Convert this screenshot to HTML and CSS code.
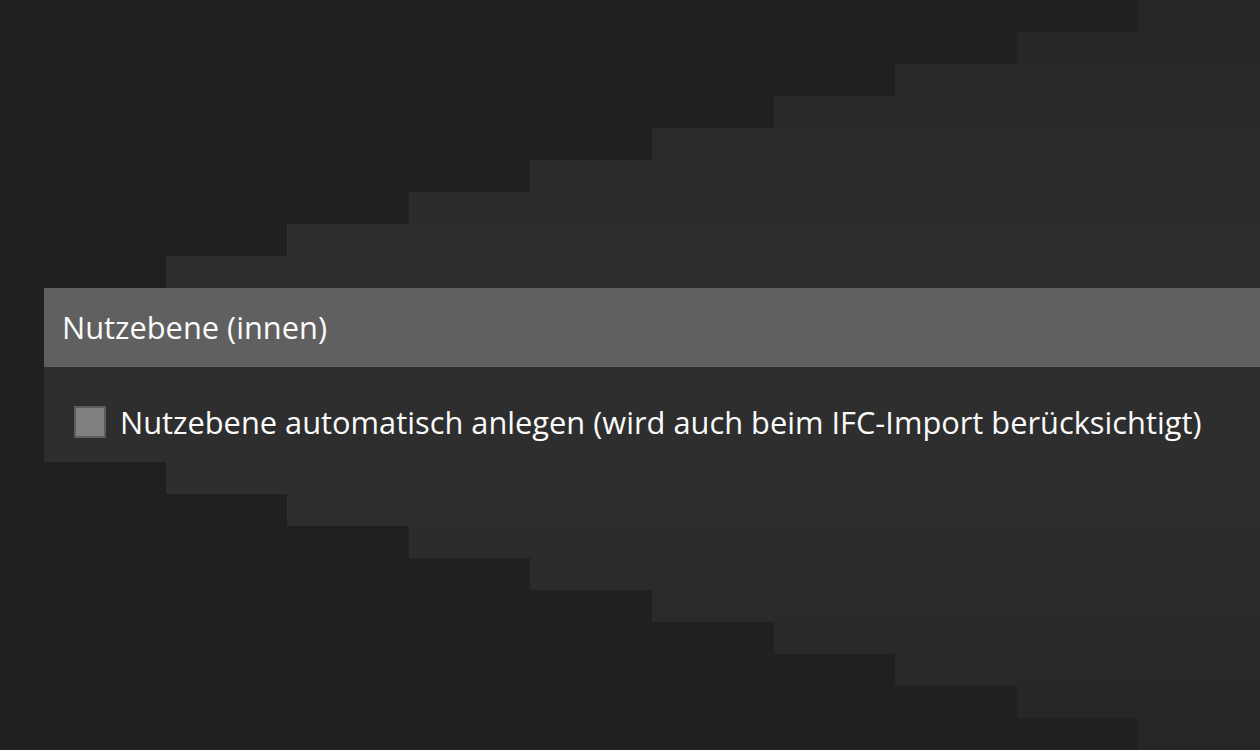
FILE: index.html
```html
<!DOCTYPE html>
<html lang="de">
<head>
<meta charset="utf-8">
<title>Nutzebene</title>
<link rel="stylesheet" href="styles.css">
</head>
<body>
<div class="stage">
  <div class="band b1"></div>
  <div class="band b2"></div>
  <div class="band b3"></div>
  <div class="band b4"></div>
  <div class="band b5"></div>
  <div class="band b6"></div>
  <div class="band b7"></div>
  <div class="band b8"></div>
  <div class="band b9"></div>
  <section class="panel">
    <div class="panel-head">Nutzebene (innen)</div>
    <div class="panel-body">
      <label class="check">
        <span class="box"></span>
        <span class="label-text">Nutzebene automatisch anlegen (wird auch beim IFC-Import berücksichtigt)</span>
      </label>
    </div>
  </section>
  <div class="band b9"></div>
  <div class="band b8"></div>
  <div class="band b7"></div>
  <div class="band b6"></div>
  <div class="band b5"></div>
  <div class="band b4"></div>
  <div class="band b3"></div>
  <div class="band b2"></div>
  <div class="band b1"></div>
</div>
</body>
</html>
```
FILE: styles.css
```css
html, body {
  margin: 0;
  padding: 0;
  background: #202020;
}
body {
  font-family: "Open Sans", "Noto Sans", sans-serif;
  color: #fafafa;
}
.stage {
  width: 1260px;
  height: 750px;
  display: flex;
  flex-direction: column;
  align-items: flex-end;
  overflow: hidden;
}
.band {
  height: 32px;
  flex: none;
}
.b1 { width: 121.6px; background: #262626; }
.b2 { width: 243.2px; background: #272727; }
.b3 { width: 364.8px; background: #282828; }
.b4 { width: 486.4px; background: #292929; }
.b5 { width: 608px;   background: #2a2a2a; }
.b6 { width: 729.6px; background: #2b2b2b; }
.b7 { width: 851.2px; background: #2c2c2c; }
.b8 { width: 972.8px; background: #2d2d2d; }
.b9 { width: 1094.4px; background: #2e2e2e; }

.panel {
  width: 1216px;
  height: 174px;
  flex: none;
  display: flex;
  flex-direction: column;
  background: #2e2e2e;
}
.panel-head {
  height: 79px;
  flex: none;
  display: flex;
  align-items: center;
  padding-left: 18px;
  background: #606060;
  font-size: 30.8px;
  line-height: 1;
}
.panel-body {
  flex: 1;
  padding: 39px 0 0 30px;
}
.check {
  display: flex;
  align-items: center;
  gap: 14px;
  font-size: 30.8px;
  line-height: 1;
}
.box {
  width: 28px;
  height: 28px;
  flex: none;
  background: #808080;
  border: 2px solid #5c5c5c;
}
.label-text {
  white-space: nowrap;
}
```
